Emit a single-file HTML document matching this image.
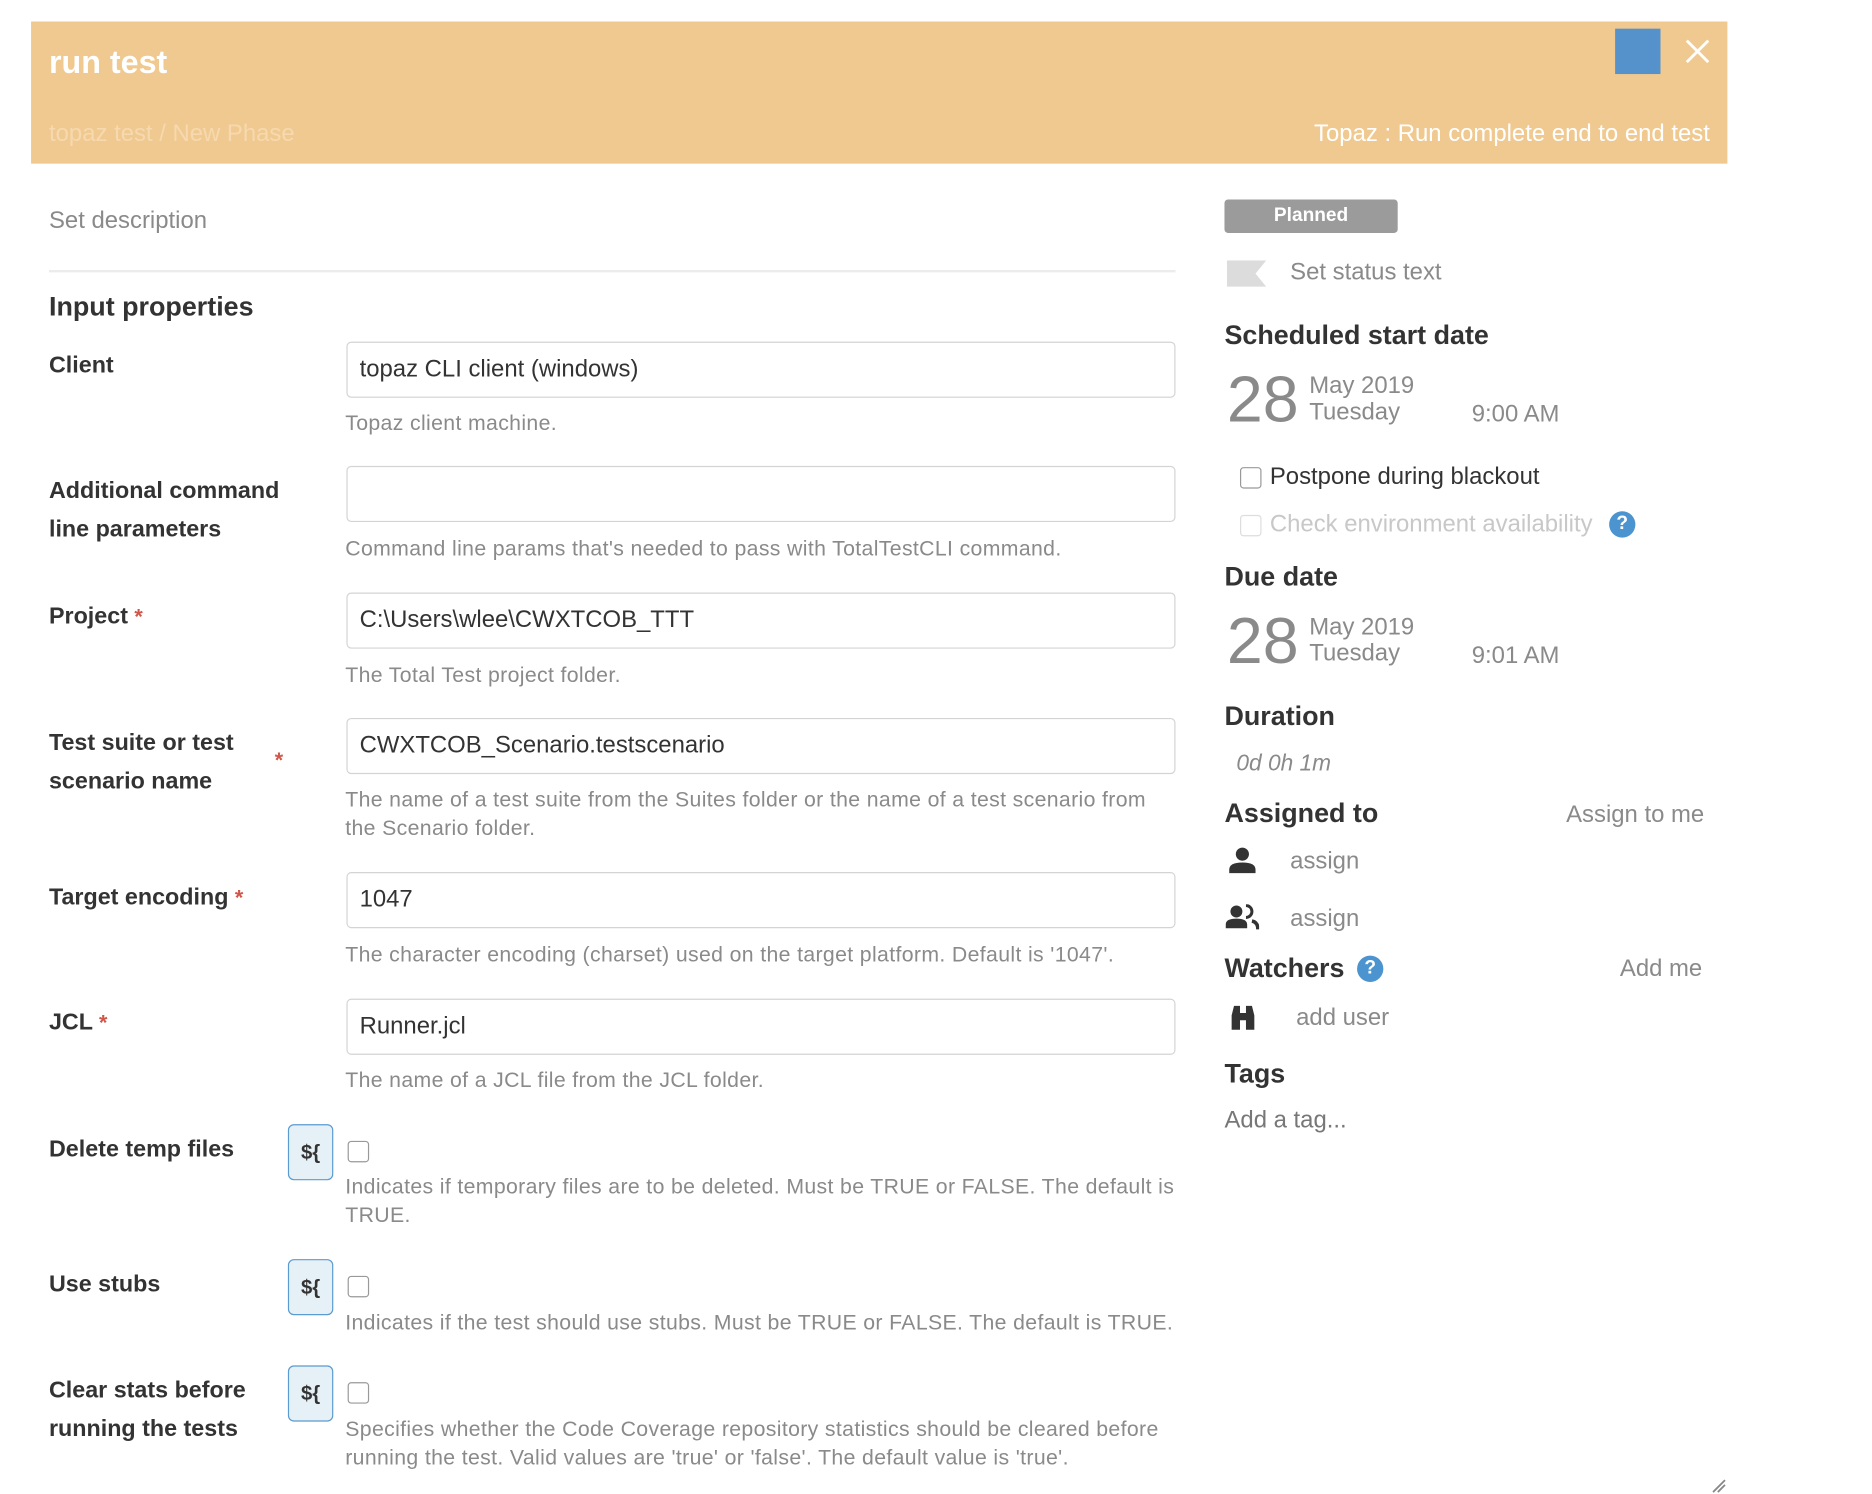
<!DOCTYPE html>
<html><head><meta charset="utf-8">
<style>
html,body{margin:0;padding:0;background:#fff;width:1872px;height:1494px;overflow:hidden}
#w{position:absolute;left:0;top:0;width:1567px;height:1251px;transform:scale(1.1946);transform-origin:0 0;font-family:"Liberation Sans",sans-serif}
#w div,#w span.a{position:absolute;white-space:nowrap}
.t{line-height:24px}
.lbl{font-size:19.5px;font-weight:bold;color:#333;left:41px;line-height:32px}
.help{font-size:17.8px;letter-spacing:0.3px;color:#8a8a8a;left:289px;line-height:24px}
.inp{left:290px;width:692px;height:45px;border:1px solid #d4d4d4;border-radius:4px;background:#fff}
.inp span{position:absolute;left:10px;top:11px;font-size:20px;color:#333}
.star{color:#d0564a;font-size:18px;font-weight:bold}
.btn{left:241px;width:36px;height:45px;border:1px solid #5a9bd0;border-radius:5px;background:#e6f0f7;font-size:17px;font-weight:bold;color:#333;text-align:center;line-height:45px}
.cb{width:16px;height:16px;border:1px solid #999;border-radius:3px;background:#fff}
.h2{font-size:22.5px;font-weight:bold;color:#333;line-height:28px}
.g{color:#8a8a8a;font-size:20px}
.big{font-size:54px;color:#8a8a8a;line-height:52px}
.q{width:22px;height:22px;border-radius:50%;background:#4b94cf;color:#fff;font-size:16px;font-weight:bold;text-align:center;line-height:22px}
</style></head><body><div id="w">
<div style="left:26px;top:18px;width:1420px;height:119px;background:#f0c990"></div>
<div class="t" style="left:41px;top:38px;font-size:27px;font-weight:bold;color:#fff;line-height:28px">run test</div>
<div class="t" style="left:41px;top:100px;font-size:20px;color:#f6d9ae">topaz test / New Phase</div>
<div class="t" style="left:1100px;top:100px;font-size:20px;color:#fff">Topaz : Run complete end to end test</div>
<div style="left:1352px;top:24px;width:38px;height:38px;background:#5592cc"></div>
<svg style="position:absolute;left:1410px;top:32px" width="22" height="22"><path d="M2 2L20 20M20 2L2 20" stroke="#fff" stroke-width="2.4"/></svg>

<div class="t g" style="left:41px;top:173px">Set description</div>
<div style="left:41px;top:226px;width:943px;height:2px;background:#ececec"></div>
<div class="h2" style="left:41px;top:243px">Input properties</div>

<div class="lbl" style="top:290px">Client</div>
<div class="inp" style="top:286px"><span>topaz CLI client (windows)</span></div>
<div class="help" style="top:342px">Topaz client machine.</div>

<div class="lbl" style="top:395px">Additional command<br>line parameters</div>
<div class="inp" style="top:390px"></div>
<div class="help" style="top:447px">Command line params that's needed to pass with TotalTestCLI command.</div>

<div class="lbl" style="top:500px">Project <span class="star">*</span></div>
<div class="inp" style="top:496px"><span>C:\Users\wlee\CWXTCOB_TTT</span></div>
<div class="help" style="top:553px">The Total Test project folder.</div>

<div class="lbl" style="top:606px">Test suite or test<br>scenario name</div>
<div class="star" style="left:230px;top:624px;line-height:24px">*</div>
<div class="inp" style="top:601px"><span>CWXTCOB_Scenario.testscenario</span></div>
<div class="help" style="top:657px">The name of a test suite from the Suites folder or the name of a test scenario from<br>the Scenario folder.</div>

<div class="lbl" style="top:735px">Target encoding <span class="star">*</span></div>
<div class="inp" style="top:730px"><span>1047</span></div>
<div class="help" style="top:787px">The character encoding (charset) used on the target platform. Default is '1047'.</div>

<div class="lbl" style="top:840px">JCL <span class="star">*</span></div>
<div class="inp" style="top:836px"><span>Runner.jcl</span></div>
<div class="help" style="top:892px">The name of a JCL file from the JCL folder.</div>

<div class="lbl" style="top:946px">Delete temp files</div>
<div class="btn" style="top:941px">${</div>
<div class="cb" style="left:291px;top:955px"></div>
<div class="help" style="top:981px">Indicates if temporary files are to be deleted. Must be TRUE or FALSE. The default is<br>TRUE.</div>

<div class="lbl" style="top:1059px">Use stubs</div>
<div class="btn" style="top:1054px">${</div>
<div class="cb" style="left:291px;top:1068px"></div>
<div class="help" style="top:1095px">Indicates if the test should use stubs. Must be TRUE or FALSE. The default is TRUE.</div>

<div class="lbl" style="top:1148px">Clear stats before<br>running the tests</div>
<div class="btn" style="top:1143px">${</div>
<div class="cb" style="left:291px;top:1157px"></div>
<div class="help" style="top:1184px">Specifies whether the Code Coverage repository statistics should be cleared before<br>running the test. Valid values are 'true' or 'false'. The default value is 'true'.</div>

<!-- right column -->
<div style="left:1025px;top:167px;width:145px;height:28px;background:#9b9b9b;border-radius:3px;color:#fff;font-size:16px;font-weight:bold;text-align:center;line-height:28px">Planned</div>
<svg style="position:absolute;left:1027px;top:218px" width="33" height="22"><path d="M0 0H33L24 11L33 22H0Z" fill="#dcdcdc"/></svg>
<div class="t g" style="left:1080px;top:216px">Set status text</div>

<div class="h2" style="left:1025px;top:267px">Scheduled start date</div>
<div class="big" style="left:1027px;top:309px">28</div>
<div class="t g" style="left:1096px;top:311px">May 2019</div>
<div class="t g" style="left:1096px;top:333px">Tuesday</div>
<div class="t g" style="left:1232px;top:335px">9:00 AM</div>
<div class="cb" style="left:1038px;top:391px"></div>
<div class="t" style="left:1063px;top:387px;font-size:20px;color:#333">Postpone during blackout</div>
<div class="cb" style="left:1038px;top:431px;border-color:#ddd"></div>
<div class="t" style="left:1063px;top:427px;font-size:20px;color:#c8c8c8">Check environment availability</div>
<div class="q" style="left:1347px;top:428px">?</div>

<div class="h2" style="left:1025px;top:469px">Due date</div>
<div class="big" style="left:1027px;top:511px">28</div>
<div class="t g" style="left:1096px;top:513px">May 2019</div>
<div class="t g" style="left:1096px;top:535px">Tuesday</div>
<div class="t g" style="left:1232px;top:537px">9:01 AM</div>

<div class="h2" style="left:1025px;top:586px">Duration</div>
<div class="t" style="left:1035px;top:628px;font-size:19px;font-style:italic;color:#8a8a8a">0d 0h 1m</div>

<div class="h2" style="left:1025px;top:667px">Assigned to</div>
<div class="t g" style="left:1311px;top:670px">Assign to me</div>
<svg style="position:absolute;left:1028px;top:709px" width="24" height="22"><circle cx="12" cy="6" r="5.5" fill="#333"/><path d="M1 22V19Q1 13 12 13Q23 13 23 19V22Z" fill="#333"/></svg>
<div class="t g" style="left:1080px;top:709px">assign</div>
<svg style="position:absolute;left:1026px;top:757px" width="28" height="22"><circle cx="9" cy="6" r="5" fill="#333"/><path d="M0 20V17Q0 12 9 12Q18 12 18 17V20Z" fill="#333"/><path d="M17 1A5 5 0 0 1 17 11" stroke="#333" stroke-width="2.5" fill="none"/><path d="M22 14Q27 15 27 21" stroke="#333" stroke-width="3" fill="none"/></svg>
<div class="t g" style="left:1080px;top:757px">assign</div>

<div class="h2" style="left:1025px;top:797px">Watchers</div>
<div class="q" style="left:1136px;top:800px">?</div>
<div class="t g" style="left:1356px;top:799px">Add me</div>
<svg style="position:absolute;left:1029px;top:840px" width="24" height="24"><path d="M2 22V10L4 2H9V22Z M14 22V2H19L21 10V22Z M9 8H14V14H9Z" fill="#333"/></svg>
<div class="t g" style="left:1085px;top:840px">add user</div>

<div class="h2" style="left:1025px;top:885px">Tags</div>
<div class="t" style="left:1025px;top:926px;font-size:20px;color:#777">Add a tag...</div>
<svg style="position:absolute;left:1432px;top:1238px" width="14" height="12"><path d="M2 11L12 1M6 11L12 5" stroke="#888" stroke-width="1.5"/></svg>
</div></body></html>
